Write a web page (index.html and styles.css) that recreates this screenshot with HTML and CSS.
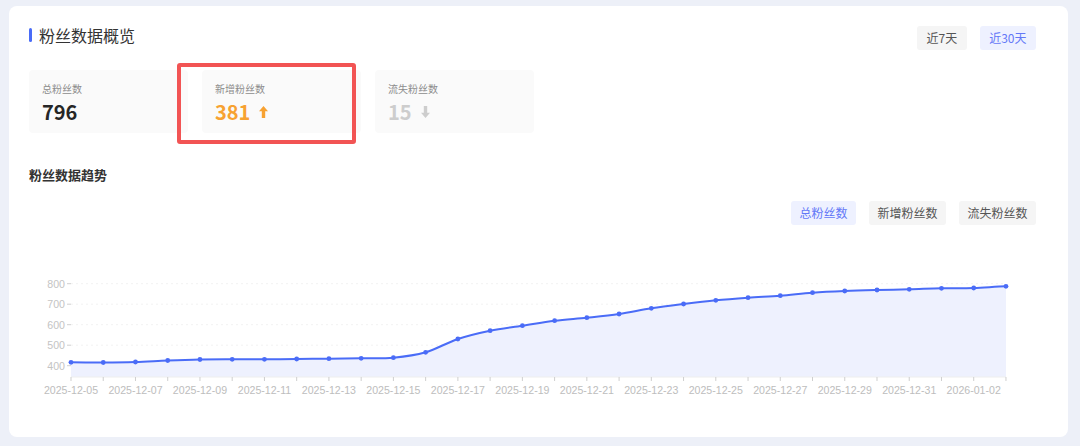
FILE: index.html
```html
<!DOCTYPE html>
<html lang="zh-CN">
<head>
<meta charset="utf-8">
<title>粉丝数据概览</title>
<link rel="stylesheet" href="styles.css">
</head>
<body>
<div class="page">
  <div class="card">
    <div class="head">
      <div class="title"><span class="bar"></span>粉丝数据概览</div>
      <div class="seg">
        <span class="btn">近7天</span>
        <span class="btn active">近30天</span>
      </div>
    </div>

    <div class="stats">
      <div class="stat">
        <div class="label">总粉丝数</div>
        <div class="value">796</div>
      </div>
      <div class="stat">
        <div class="label">新增粉丝数</div>
        <div class="value up">381
          <svg class="arrow" viewBox="0 0 9 12" width="9" height="12"><path d="M4.5 0 L9 5.2 H6.2 V12 H2.8 V5.2 H0 Z" fill="currentColor"/></svg>
        </div>
      </div>
      <div class="stat">
        <div class="label">流失粉丝数</div>
        <div class="value down">15
          <svg class="arrow" viewBox="0 0 9 12" width="9" height="12"><path d="M4.5 12 L9 6.8 H6.2 V0 H2.8 V6.8 H0 Z" fill="currentColor"/></svg>
        </div>
      </div>
      <div class="highlight"></div>
    </div>

    <div class="subtitle">粉丝数据趋势</div>

    <div class="filters">
      <span class="btn active">总粉丝数</span>
      <span class="btn">新增粉丝数</span>
      <span class="btn">流失粉丝数</span>
    </div>

    <svg class="chart" width="1007" height="175" viewBox="29 225 1007 175">
      <g class="grid">
        <line x1="71" y1="283.7" x2="1006" y2="283.7"/>
        <line x1="71" y1="304.2" x2="1006" y2="304.2"/>
        <line x1="71" y1="324.7" x2="1006" y2="324.7"/>
        <line x1="71" y1="345.2" x2="1006" y2="345.2"/>
        <line x1="71" y1="365.7" x2="1006" y2="365.7"/>
      </g>
      <g class="ylabels">
        <text x="65" y="287.5">800</text>
        <text x="65" y="308">700</text>
        <text x="65" y="328.5">600</text>
        <text x="65" y="349">500</text>
        <text x="65" y="369.5">400</text>
      </g>
      <g class="yticks">
        <line x1="67" y1="283.7" x2="71" y2="283.7"/>
        <line x1="67" y1="304.2" x2="71" y2="304.2"/>
        <line x1="67" y1="324.7" x2="71" y2="324.7"/>
        <line x1="67" y1="345.2" x2="71" y2="345.2"/>
        <line x1="67" y1="365.7" x2="71" y2="365.7"/>
      </g>
      <path class="area" d="M71,362.3 C81.75,362.3 92.49,362.55 103.24,362.5 C113.99,362.45 124.73,362.33 135.48,362 C146.23,361.67 156.97,360.92 167.72,360.5 C178.47,360.08 189.21,359.7 199.96,359.5 C210.71,359.3 221.45,359.33 232.2,359.3 C242.95,359.27 253.69,359.35 264.44,359.3 C275.19,359.25 285.93,359.1 296.68,359 C307.43,358.9 318.17,358.82 328.92,358.7 C339.67,358.58 350.41,358.47 361.16,358.3 C371.91,358.13 382.65,358.7 393.4,357.7 C404.15,356.7 414.89,355.42 425.64,352.3 C436.39,349.18 447.13,342.6 457.88,339 C468.63,335.4 479.37,332.92 490.12,330.7 C500.87,328.48 511.61,327.37 522.36,325.7 C533.11,324.03 543.85,322.03 554.6,320.7 C565.35,319.37 576.09,318.82 586.84,317.7 C597.59,316.58 608.33,315.57 619.08,314 C629.83,312.43 640.57,309.97 651.32,308.3 C662.07,306.63 672.81,305.33 683.56,304 C694.31,302.67 705.05,301.35 715.8,300.3 C726.55,299.25 737.29,298.47 748.04,297.7 C758.79,296.93 769.53,296.53 780.28,295.7 C791.03,294.87 801.77,293.48 812.52,292.7 C823.27,291.92 834.01,291.45 844.76,291 C855.51,290.55 866.25,290.28 877,290 C887.75,289.72 898.49,289.58 909.24,289.3 C919.99,289.02 930.73,288.52 941.48,288.3 C952.23,288.08 962.97,288.33 973.72,288 C984.47,287.67 995.21,286.58 1005.96,286.3 L1005.96,377 L71,377 Z"/>
      <line class="xaxis" x1="71" y1="377" x2="1006" y2="377"/>
      <g class="xticks">
        <line x1="71" y1="377" x2="71" y2="381"/><line x1="103.24" y1="377" x2="103.24" y2="381"/><line x1="135.48" y1="377" x2="135.48" y2="381"/><line x1="167.72" y1="377" x2="167.72" y2="381"/><line x1="199.96" y1="377" x2="199.96" y2="381"/><line x1="232.2" y1="377" x2="232.2" y2="381"/><line x1="264.44" y1="377" x2="264.44" y2="381"/><line x1="296.68" y1="377" x2="296.68" y2="381"/><line x1="328.92" y1="377" x2="328.92" y2="381"/><line x1="361.16" y1="377" x2="361.16" y2="381"/><line x1="393.4" y1="377" x2="393.4" y2="381"/><line x1="425.64" y1="377" x2="425.64" y2="381"/><line x1="457.88" y1="377" x2="457.88" y2="381"/><line x1="490.12" y1="377" x2="490.12" y2="381"/><line x1="522.36" y1="377" x2="522.36" y2="381"/><line x1="554.6" y1="377" x2="554.6" y2="381"/><line x1="586.84" y1="377" x2="586.84" y2="381"/><line x1="619.08" y1="377" x2="619.08" y2="381"/><line x1="651.32" y1="377" x2="651.32" y2="381"/><line x1="683.56" y1="377" x2="683.56" y2="381"/><line x1="715.8" y1="377" x2="715.8" y2="381"/><line x1="748.04" y1="377" x2="748.04" y2="381"/><line x1="780.28" y1="377" x2="780.28" y2="381"/><line x1="812.52" y1="377" x2="812.52" y2="381"/><line x1="844.76" y1="377" x2="844.76" y2="381"/><line x1="877" y1="377" x2="877" y2="381"/><line x1="909.24" y1="377" x2="909.24" y2="381"/><line x1="941.48" y1="377" x2="941.48" y2="381"/><line x1="973.72" y1="377" x2="973.72" y2="381"/><line x1="1005.96" y1="377" x2="1005.96" y2="381"/>
      </g>
      <g class="xlabels">
        <text x="71" y="393.5">2025-12-05</text>
        <text x="135.48" y="393.5">2025-12-07</text>
        <text x="199.96" y="393.5">2025-12-09</text>
        <text x="264.44" y="393.5">2025-12-11</text>
        <text x="328.92" y="393.5">2025-12-13</text>
        <text x="393.4" y="393.5">2025-12-15</text>
        <text x="457.88" y="393.5">2025-12-17</text>
        <text x="522.36" y="393.5">2025-12-19</text>
        <text x="586.84" y="393.5">2025-12-21</text>
        <text x="651.32" y="393.5">2025-12-23</text>
        <text x="715.8" y="393.5">2025-12-25</text>
        <text x="780.28" y="393.5">2025-12-27</text>
        <text x="844.76" y="393.5">2025-12-29</text>
        <text x="909.24" y="393.5">2025-12-31</text>
        <text x="973.72" y="393.5">2026-01-02</text>
      </g>
      <path class="line" d="M71,362.3 C81.75,362.3 92.49,362.55 103.24,362.5 C113.99,362.45 124.73,362.33 135.48,362 C146.23,361.67 156.97,360.92 167.72,360.5 C178.47,360.08 189.21,359.7 199.96,359.5 C210.71,359.3 221.45,359.33 232.2,359.3 C242.95,359.27 253.69,359.35 264.44,359.3 C275.19,359.25 285.93,359.1 296.68,359 C307.43,358.9 318.17,358.82 328.92,358.7 C339.67,358.58 350.41,358.47 361.16,358.3 C371.91,358.13 382.65,358.7 393.4,357.7 C404.15,356.7 414.89,355.42 425.64,352.3 C436.39,349.18 447.13,342.6 457.88,339 C468.63,335.4 479.37,332.92 490.12,330.7 C500.87,328.48 511.61,327.37 522.36,325.7 C533.11,324.03 543.85,322.03 554.6,320.7 C565.35,319.37 576.09,318.82 586.84,317.7 C597.59,316.58 608.33,315.57 619.08,314 C629.83,312.43 640.57,309.97 651.32,308.3 C662.07,306.63 672.81,305.33 683.56,304 C694.31,302.67 705.05,301.35 715.8,300.3 C726.55,299.25 737.29,298.47 748.04,297.7 C758.79,296.93 769.53,296.53 780.28,295.7 C791.03,294.87 801.77,293.48 812.52,292.7 C823.27,291.92 834.01,291.45 844.76,291 C855.51,290.55 866.25,290.28 877,290 C887.75,289.72 898.49,289.58 909.24,289.3 C919.99,289.02 930.73,288.52 941.48,288.3 C952.23,288.08 962.97,288.33 973.72,288 C984.47,287.67 995.21,286.58 1005.96,286.3"/>
      <g class="dots">
        <circle cx="71" cy="362.3" r="2.4"/><circle cx="103.24" cy="362.5" r="2.4"/><circle cx="135.48" cy="362" r="2.4"/><circle cx="167.72" cy="360.5" r="2.4"/><circle cx="199.96" cy="359.5" r="2.4"/><circle cx="232.2" cy="359.3" r="2.4"/><circle cx="264.44" cy="359.3" r="2.4"/><circle cx="296.68" cy="359" r="2.4"/><circle cx="328.92" cy="358.7" r="2.4"/><circle cx="361.16" cy="358.3" r="2.4"/><circle cx="393.4" cy="357.7" r="2.4"/><circle cx="425.64" cy="352.3" r="2.4"/><circle cx="457.88" cy="339" r="2.4"/><circle cx="490.12" cy="330.7" r="2.4"/><circle cx="522.36" cy="325.7" r="2.4"/><circle cx="554.6" cy="320.7" r="2.4"/><circle cx="586.84" cy="317.7" r="2.4"/><circle cx="619.08" cy="314" r="2.4"/><circle cx="651.32" cy="308.3" r="2.4"/><circle cx="683.56" cy="304" r="2.4"/><circle cx="715.8" cy="300.3" r="2.4"/><circle cx="748.04" cy="297.7" r="2.4"/><circle cx="780.28" cy="295.7" r="2.4"/><circle cx="812.52" cy="292.7" r="2.4"/><circle cx="844.76" cy="291" r="2.4"/><circle cx="877" cy="290" r="2.4"/><circle cx="909.24" cy="289.3" r="2.4"/><circle cx="941.48" cy="288.3" r="2.4"/><circle cx="973.72" cy="288" r="2.4"/><circle cx="1005.96" cy="286.3" r="2.4"/>
      </g>
    </svg>
  </div>
</div>
</body>
</html>
```

FILE: styles.css
```css
* { box-sizing: border-box; }

html, body {
  margin: 0;
  padding: 0;
  background: #edf0f8;
  font-family: "Noto Sans CJK SC", "Noto Sans", sans-serif;
  color: #333;
}

.page {
  width: 1080px;
  height: 446px;
  padding: 6px 12px 9px 9px;
}

.card {
  background: #fff;
  border-radius: 8px;
  padding: 20px 32px 37px 20px;
}

.head {
  display: flex;
  justify-content: space-between;
  align-items: flex-start;
  height: 24px;
}

.title {
  display: flex;
  align-items: center;
  font-size: 16px;
  line-height: 19px;
  color: #333;
  gap: 7px;
}

.bar {
  display: block;
  width: 3px;
  height: 14px;
  border-radius: 2px;
  background: #4a6cf7;
  margin-top: -1px;
}

.seg, .filters {
  display: flex;
  gap: 13px;
}

.filters {
  justify-content: flex-end;
  margin-top: 17px;
}

.btn {
  display: inline-flex;
  align-items: center;
  height: 24px;
  padding: 0 9.5px;
  font-size: 12px;
  line-height: 1;
  color: #555;
  background: #f5f5f5;
  border-radius: 3px;
}

.filters .btn {
  padding: 0 8.5px;
}

.btn.active {
  background: #eef1ff;
  color: #6478f7;
}

.stats {
  position: relative;
  display: flex;
  gap: 14px;
  margin-top: 20px;
}

.stat {
  width: 159px;
  height: 63px;
  background: #fafafa;
  border-radius: 4px;
  padding: 12px 13px 0;
}

.label {
  font-size: 10px;
  line-height: 14px;
  color: #8c8c8c;
}

.value {
  display: flex;
  align-items: center;
  gap: 9px;
  margin-top: 3px;
  font-size: 20px;
  line-height: 26px;
  font-weight: 700;
  color: #262626;
}

.value.up { color: #f7a232; }
.value.down { color: #cdcdcd; }

.arrow { display: block; }

.highlight {
  position: absolute;
  left: 148px;
  top: -7px;
  width: 179px;
  height: 81px;
  border: 4px solid #f25454;
  border-radius: 3px;
}

.subtitle {
  margin-top: 33px;
  font-size: 13px;
  line-height: 18px;
  font-weight: 700;
  color: #333;
}

.chart {
  display: block;
  font-family: "Liberation Sans", Arial, sans-serif;
}

.grid line {
  stroke: #f2f2f2;
  stroke-width: 1;
  stroke-dasharray: 2 3;
}

.ylabels text {
  font-size: 10.6px;
  fill: #c4c4c4;
  text-anchor: end;
}

.yticks line, .xticks line {
  stroke: #cfcfcf;
  stroke-width: 1;
}

.xaxis {
  stroke: #eeeeee;
  stroke-width: 1;
}

.xlabels text {
  font-size: 10.6px;
  fill: #bdbdbd;
  text-anchor: middle;
}

.area {
  fill: #eef1fe;
}

.line {
  fill: none;
  stroke: #4a6cf7;
  stroke-width: 2;
  stroke-linejoin: round;
  stroke-linecap: round;
}

.dots circle {
  fill: #4a6cf7;
}
```
